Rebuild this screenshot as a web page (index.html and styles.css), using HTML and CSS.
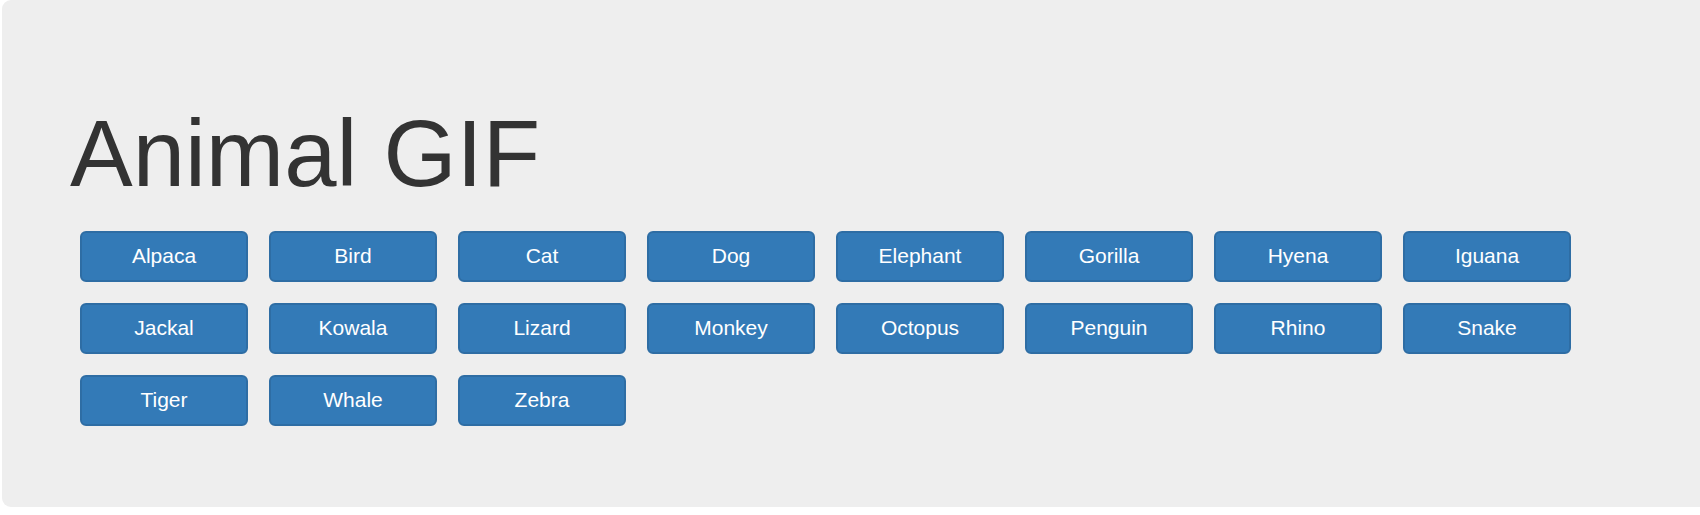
FILE: index.html
```html
<!DOCTYPE html>
<html lang="en">
<head>
<meta charset="utf-8">
<meta name="viewport" content="width=device-width, initial-scale=1">
<title>Animal GIF</title>
<link rel="stylesheet" href="styles.css">
</head>
<body>
<main class="jumbotron">
  <h1 class="title">Animal GIF</h1>
  <div class="animals">
    <button type="button" class="btn">Alpaca</button>
    <button type="button" class="btn">Bird</button>
    <button type="button" class="btn">Cat</button>
    <button type="button" class="btn">Dog</button>
    <button type="button" class="btn">Elephant</button>
    <button type="button" class="btn">Gorilla</button>
    <button type="button" class="btn">Hyena</button>
    <button type="button" class="btn">Iguana</button>
    <button type="button" class="btn">Jackal</button>
    <button type="button" class="btn">Kowala</button>
    <button type="button" class="btn">Lizard</button>
    <button type="button" class="btn">Monkey</button>
    <button type="button" class="btn">Octopus</button>
    <button type="button" class="btn">Penguin</button>
    <button type="button" class="btn">Rhino</button>
    <button type="button" class="btn">Snake</button>
    <button type="button" class="btn">Tiger</button>
    <button type="button" class="btn">Whale</button>
    <button type="button" class="btn">Zebra</button>
  </div>
</main>
</body>
</html>
```
FILE: styles.css
```css
* {
  box-sizing: border-box;
}

body {
  margin: 0;
  background: #fff;
  color: #333;
  font-family: "Helvetica Neue", Helvetica, Arial, "Liberation Sans", sans-serif;
}

.jumbotron {
  margin-left: 2px;
  padding: 102px 68px 81px;
  background: #eee;
  border-radius: 9px 0 0 9px;
}

.title {
  margin: 0 0 25px;
  font-size: 94px;
  font-weight: 500;
  line-height: 104px;
}

.animals {
  display: flex;
  flex-wrap: wrap;
  gap: 21px;
  padding: 0 10px;
}

.btn {
  width: 168px;
  padding: 8px 18px 10px;
  border: 2px solid #2e6da4;
  border-radius: 6px;
  background: #337ab7;
  color: #fff;
  font-family: inherit;
  font-size: 21px;
  line-height: 29px;
  text-align: center;
  cursor: pointer;
}

.btn:hover {
  background: #286090;
  border-color: #204d74;
}
```
